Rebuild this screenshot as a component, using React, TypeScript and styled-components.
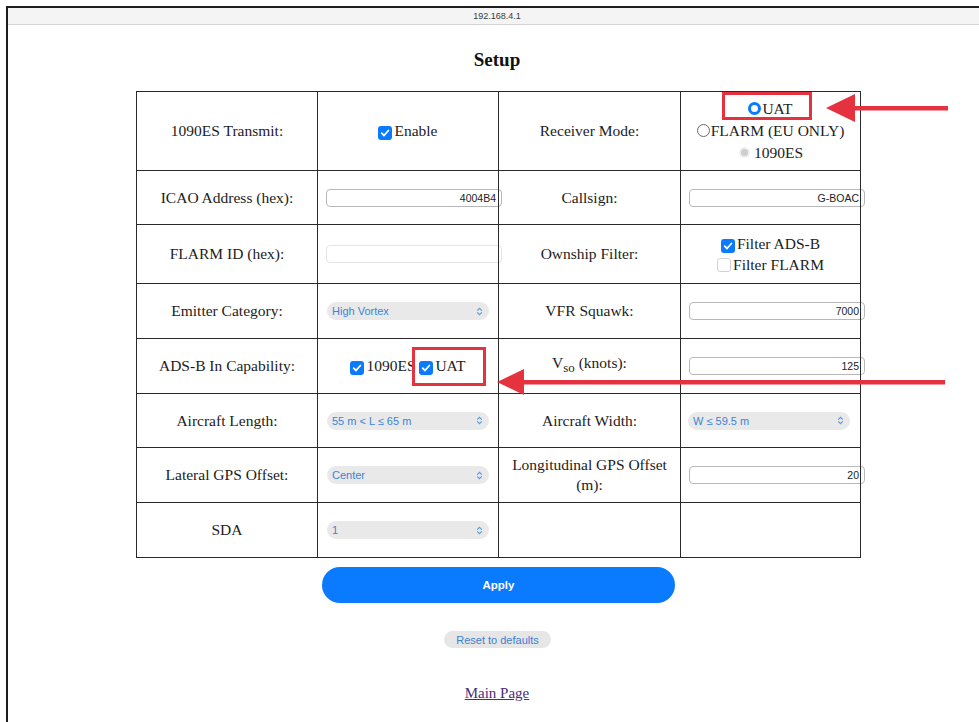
import React from "react";
import styled, { createGlobalStyle, css } from "styled-components";

const GlobalStyle = createGlobalStyle`
  html, body {
    margin: 0;
    padding: 0;
    background: #fff;
    overflow: hidden;
  }
  body {
    font-family: "Liberation Serif", "Times New Roman", serif;
    color: #1c1c1c;
  }
`;

const Window = styled.div`
  position: relative;
  box-sizing: border-box;
  width: 980px;
  height: 716px;
  margin: 6px 0 0 6px;
  border-top: 2px solid #1e1e1e;
  border-left: 2px solid #1e1e1e;
`;

const AddressBar = styled.div`
  height: 16px;
  display: flex;
  align-items: center;
  justify-content: center;
  background: #f4f4f4;
  border-bottom: 1px solid #d4d4d4;
  font: 9px "Liberation Sans", Arial, sans-serif;
  color: #3a3a3a;
`;

const Page = styled.div`
  display: flex;
  flex-direction: column;
  align-items: center;
`;

const Title = styled.h1`
  margin: 24px 0 0;
  font-size: 19px;
  line-height: 22px;
  font-weight: bold;
  color: #111;
`;

const Grid = styled.table`
  margin: 20px 0 0 3px;
  width: 724px;
  table-layout: fixed;
  border-collapse: collapse;
  border: 1px solid #2a2a2a;
`;

const Row = styled.tr<{ $h: number }>`
  height: ${p => p.$h}px;
`;

const Cell = styled.td`
  border: 1px solid #2a2a2a;
  padding: 0;
  text-align: center;
  vertical-align: middle;
  font-size: 15.5px;
  line-height: 20px;
`;

const LabelCell = styled(Cell)`
  padding: 0 12px;
`;

const Lines = styled.div<{ $lh: number }>`
  line-height: ${p => p.$lh}px;
`;

const TextInput = styled.input`
  display: block;
  box-sizing: border-box;
  width: 176px;
  height: 18px;
  margin-left: 8px;
  padding: 0 5px;
  border: 1px solid #b8b8b8;
  border-radius: 4px;
  background: #fff;
  text-align: right;
  font: 10.5px "Liberation Sans", Arial, sans-serif;
  color: #222;
  outline: none;
`;

const SelectBox = styled.div<{ $left: number }>`
  display: flex;
  align-items: center;
  justify-content: space-between;
  box-sizing: border-box;
  width: 162px;
  height: 18px;
  margin-left: ${p => p.$left}px;
  padding: 0 6px 0 5px;
  border-radius: 9px;
  background: #e9e9e9;
  font: 11px "Liberation Sans", Arial, sans-serif;
  color: #3b84d8;
`;

const CheckBox = styled.span<{ $on?: boolean }>`
  display: inline-flex;
  align-items: center;
  justify-content: center;
  box-sizing: border-box;
  width: 14px;
  height: 14px;
  margin-right: 2px;
  vertical-align: -2px;
  border-radius: 3px;
  ${p =>
    p.$on
      ? css`
          background: #0a7aff;
        `
      : css`
          background: #fff;
          border: 1px solid #d2d2d2;
        `}
`;

type RadioState = "on" | "off" | "disabled";

const RadioDot = styled.span<{ $state: RadioState }>`
  display: inline-block;
  box-sizing: border-box;
  border-radius: 50%;
  ${p =>
    p.$state === "on"
      ? css`
          width: 13px;
          height: 13px;
          margin-right: 1px;
          vertical-align: -1px;
          border: 3.5px solid #0a7aff;
          background: #fff;
        `
      : p.$state === "off"
      ? css`
          width: 13px;
          height: 13px;
          margin-right: 1px;
          vertical-align: -1px;
          border: 1px solid #6c6c6c;
          background: #fff;
        `
      : css`
          width: 7px;
          height: 7px;
          margin: 0 6px 0 3px;
          vertical-align: 2px;
          background: #cdcdcd;
          box-shadow: 0 0 0 2px #efefef;
        `}
`;

const Marked = styled.span<{ $inset: string }>`
  position: relative;
  &::after {
    content: "";
    position: absolute;
    inset: ${p => p.$inset};
    border: 3px solid #e5323f;
    pointer-events: none;
  }
`;

const Buttons = styled.div`
  display: flex;
  flex-direction: column;
  align-items: center;
`;

const ApplyButton = styled.button`
  width: 353px;
  height: 36px;
  margin: 9px 0 0 3px;
  border: none;
  border-radius: 18px;
  background: #0a7aff;
  color: #fff;
  font: bold 11.5px "Liberation Sans", Arial, sans-serif;
`;

const ResetButton = styled.button`
  width: 107px;
  height: 17px;
  margin: 28px 0 0 1px;
  padding: 0;
  border: none;
  border-radius: 9px;
  background: #e6e6e6;
  color: #3d80d2;
  font: 11px "Liberation Sans", Arial, sans-serif;
`;

const MainLink = styled.a`
  margin-top: 37px;
  font-size: 15px;
  line-height: 17px;
  color: #4b2d78;
  text-decoration: underline;
`;

const Overlay = styled.svg`
  position: absolute;
  left: -8px;
  top: -8px;
  width: 979px;
  height: 722px;
  pointer-events: none;
`;

const Check: React.FC<{ on?: boolean }> = ({ on }) => (
  <CheckBox $on={on}>
    {on && (
      <svg width="10" height="10" viewBox="0 0 10 10">
        <path
          d="M1.7 5.2 4 7.5 8.4 2.5"
          fill="none"
          stroke="#fff"
          strokeWidth="1.8"
          strokeLinecap="round"
          strokeLinejoin="round"
        />
      </svg>
    )}
  </CheckBox>
);

const Select: React.FC<{ value: string; left?: number }> = ({ value, left = 9 }) => (
  <SelectBox $left={left}>
    <span>{value}</span>
    <svg width="7" height="9" viewBox="0 0 7 9">
      <path
        d="M1.2 3.6 3.5 1.3 5.8 3.6M1.2 5.4 3.5 7.7 5.8 5.4"
        fill="none"
        stroke="#5a9be4"
        strokeWidth="1.2"
      />
    </svg>
  </SelectBox>
);

// red call-out arrow pointing left: tip x, base of head, tail end, centre y
const Arrow: React.FC<{ tip: number; base: number; tail: number; y: number; half: number }> = ({
  tip,
  base,
  tail,
  y,
  half,
}) => (
  <g fill="#e5323f">
    <rect x={base - 1} y={y - 2} width={tail - base + 1} height={4.5} />
    <polygon points={`${tip},${y} ${base},${y - half} ${base},${y + half}`} />
  </g>
);

export default function App() {
  return (
    <>
      <GlobalStyle />
      <Window>
        <AddressBar>192.168.4.1</AddressBar>
        <Page>
          <Title>Setup</Title>
          <Grid>
            <colgroup>
              <col style={{ width: 181 }} />
              <col style={{ width: 181 }} />
              <col style={{ width: 182 }} />
              <col style={{ width: 180 }} />
            </colgroup>
            <tbody>
              <Row $h={79}>
                <LabelCell>1090ES Transmit:</LabelCell>
                <Cell>
                  <Check on />
                  Enable
                </Cell>
                <LabelCell>Receiver Mode:</LabelCell>
                <Cell>
                  <Lines $lh={22}>
                    <div>
                      <Marked $inset="-8px -19px -3px -26px">
                        <RadioDot $state="on" />
                        UAT
                      </Marked>
                    </div>
                    <div>
                      <RadioDot $state="off" />
                      FLARM (EU ONLY)
                    </div>
                    <div>
                      <RadioDot $state="disabled" />
                      1090ES
                    </div>
                  </Lines>
                </Cell>
              </Row>
              <Row $h={54}>
                <LabelCell>ICAO Address (hex):</LabelCell>
                <Cell>
                  <TextInput defaultValue="4004B4" />
                </Cell>
                <LabelCell>Callsign:</LabelCell>
                <Cell>
                  <TextInput defaultValue="G-BOAC" />
                </Cell>
              </Row>
              <Row $h={59}>
                <LabelCell>FLARM ID (hex):</LabelCell>
                <Cell>
                  <TextInput defaultValue="" style={{ borderColor: "#e4e4e4" }} />
                </Cell>
                <LabelCell>Ownship Filter:</LabelCell>
                <Cell>
                  <Lines $lh={21}>
                    <div>
                      <Check on />
                      Filter ADS-B
                    </div>
                    <div>
                      <Check />
                      Filter FLARM
                    </div>
                  </Lines>
                </Cell>
              </Row>
              <Row $h={55}>
                <LabelCell>Emitter Category:</LabelCell>
                <Cell>
                  <Select value="High Vortex" />
                </Cell>
                <LabelCell>VFR Squawk:</LabelCell>
                <Cell>
                  <TextInput defaultValue="7000" />
                </Cell>
              </Row>
              <Row $h={55}>
                <LabelCell>ADS-B In Capability:</LabelCell>
                <Cell>
                  <Check on />
                  1090ES{" "}
                  <Marked $inset="-10px -20px -12px -7px">
                    <Check on />
                    UAT
                  </Marked>
                </Cell>
                <LabelCell>
                  V<sub>so</sub> (knots):
                </LabelCell>
                <Cell>
                  <TextInput defaultValue="125" />
                </Cell>
              </Row>
              <Row $h={54}>
                <LabelCell>Aircraft Length:</LabelCell>
                <Cell>
                  <Select value="55 m < L ≤ 65 m" />
                </Cell>
                <LabelCell>Aircraft Width:</LabelCell>
                <Cell>
                  <Select value="W ≤ 59.5 m" left={7} />
                </Cell>
              </Row>
              <Row $h={55}>
                <LabelCell>Lateral GPS Offset:</LabelCell>
                <Cell>
                  <Select value="Center" />
                </Cell>
                <LabelCell>Longitudinal GPS Offset (m):</LabelCell>
                <Cell>
                  <TextInput defaultValue="20" />
                </Cell>
              </Row>
              <Row $h={55}>
                <LabelCell>SDA</LabelCell>
                <Cell>
                  <Select value="1" />
                </Cell>
                <Cell />
                <Cell />
              </Row>
            </tbody>
          </Grid>
          <Buttons>
            <ApplyButton>Apply</ApplyButton>
            <ResetButton>Reset to defaults</ResetButton>
          </Buttons>
          <MainLink href="#">Main Page</MainLink>
        </Page>
        <Overlay viewBox="0 0 979 722">
          <Arrow tip={826} base={855} tail={948} y={108} half={14} />
          <Arrow tip={497} base={524} tail={945} y={382} half={13} />
        </Overlay>
      </Window>
    </>
  );
}
